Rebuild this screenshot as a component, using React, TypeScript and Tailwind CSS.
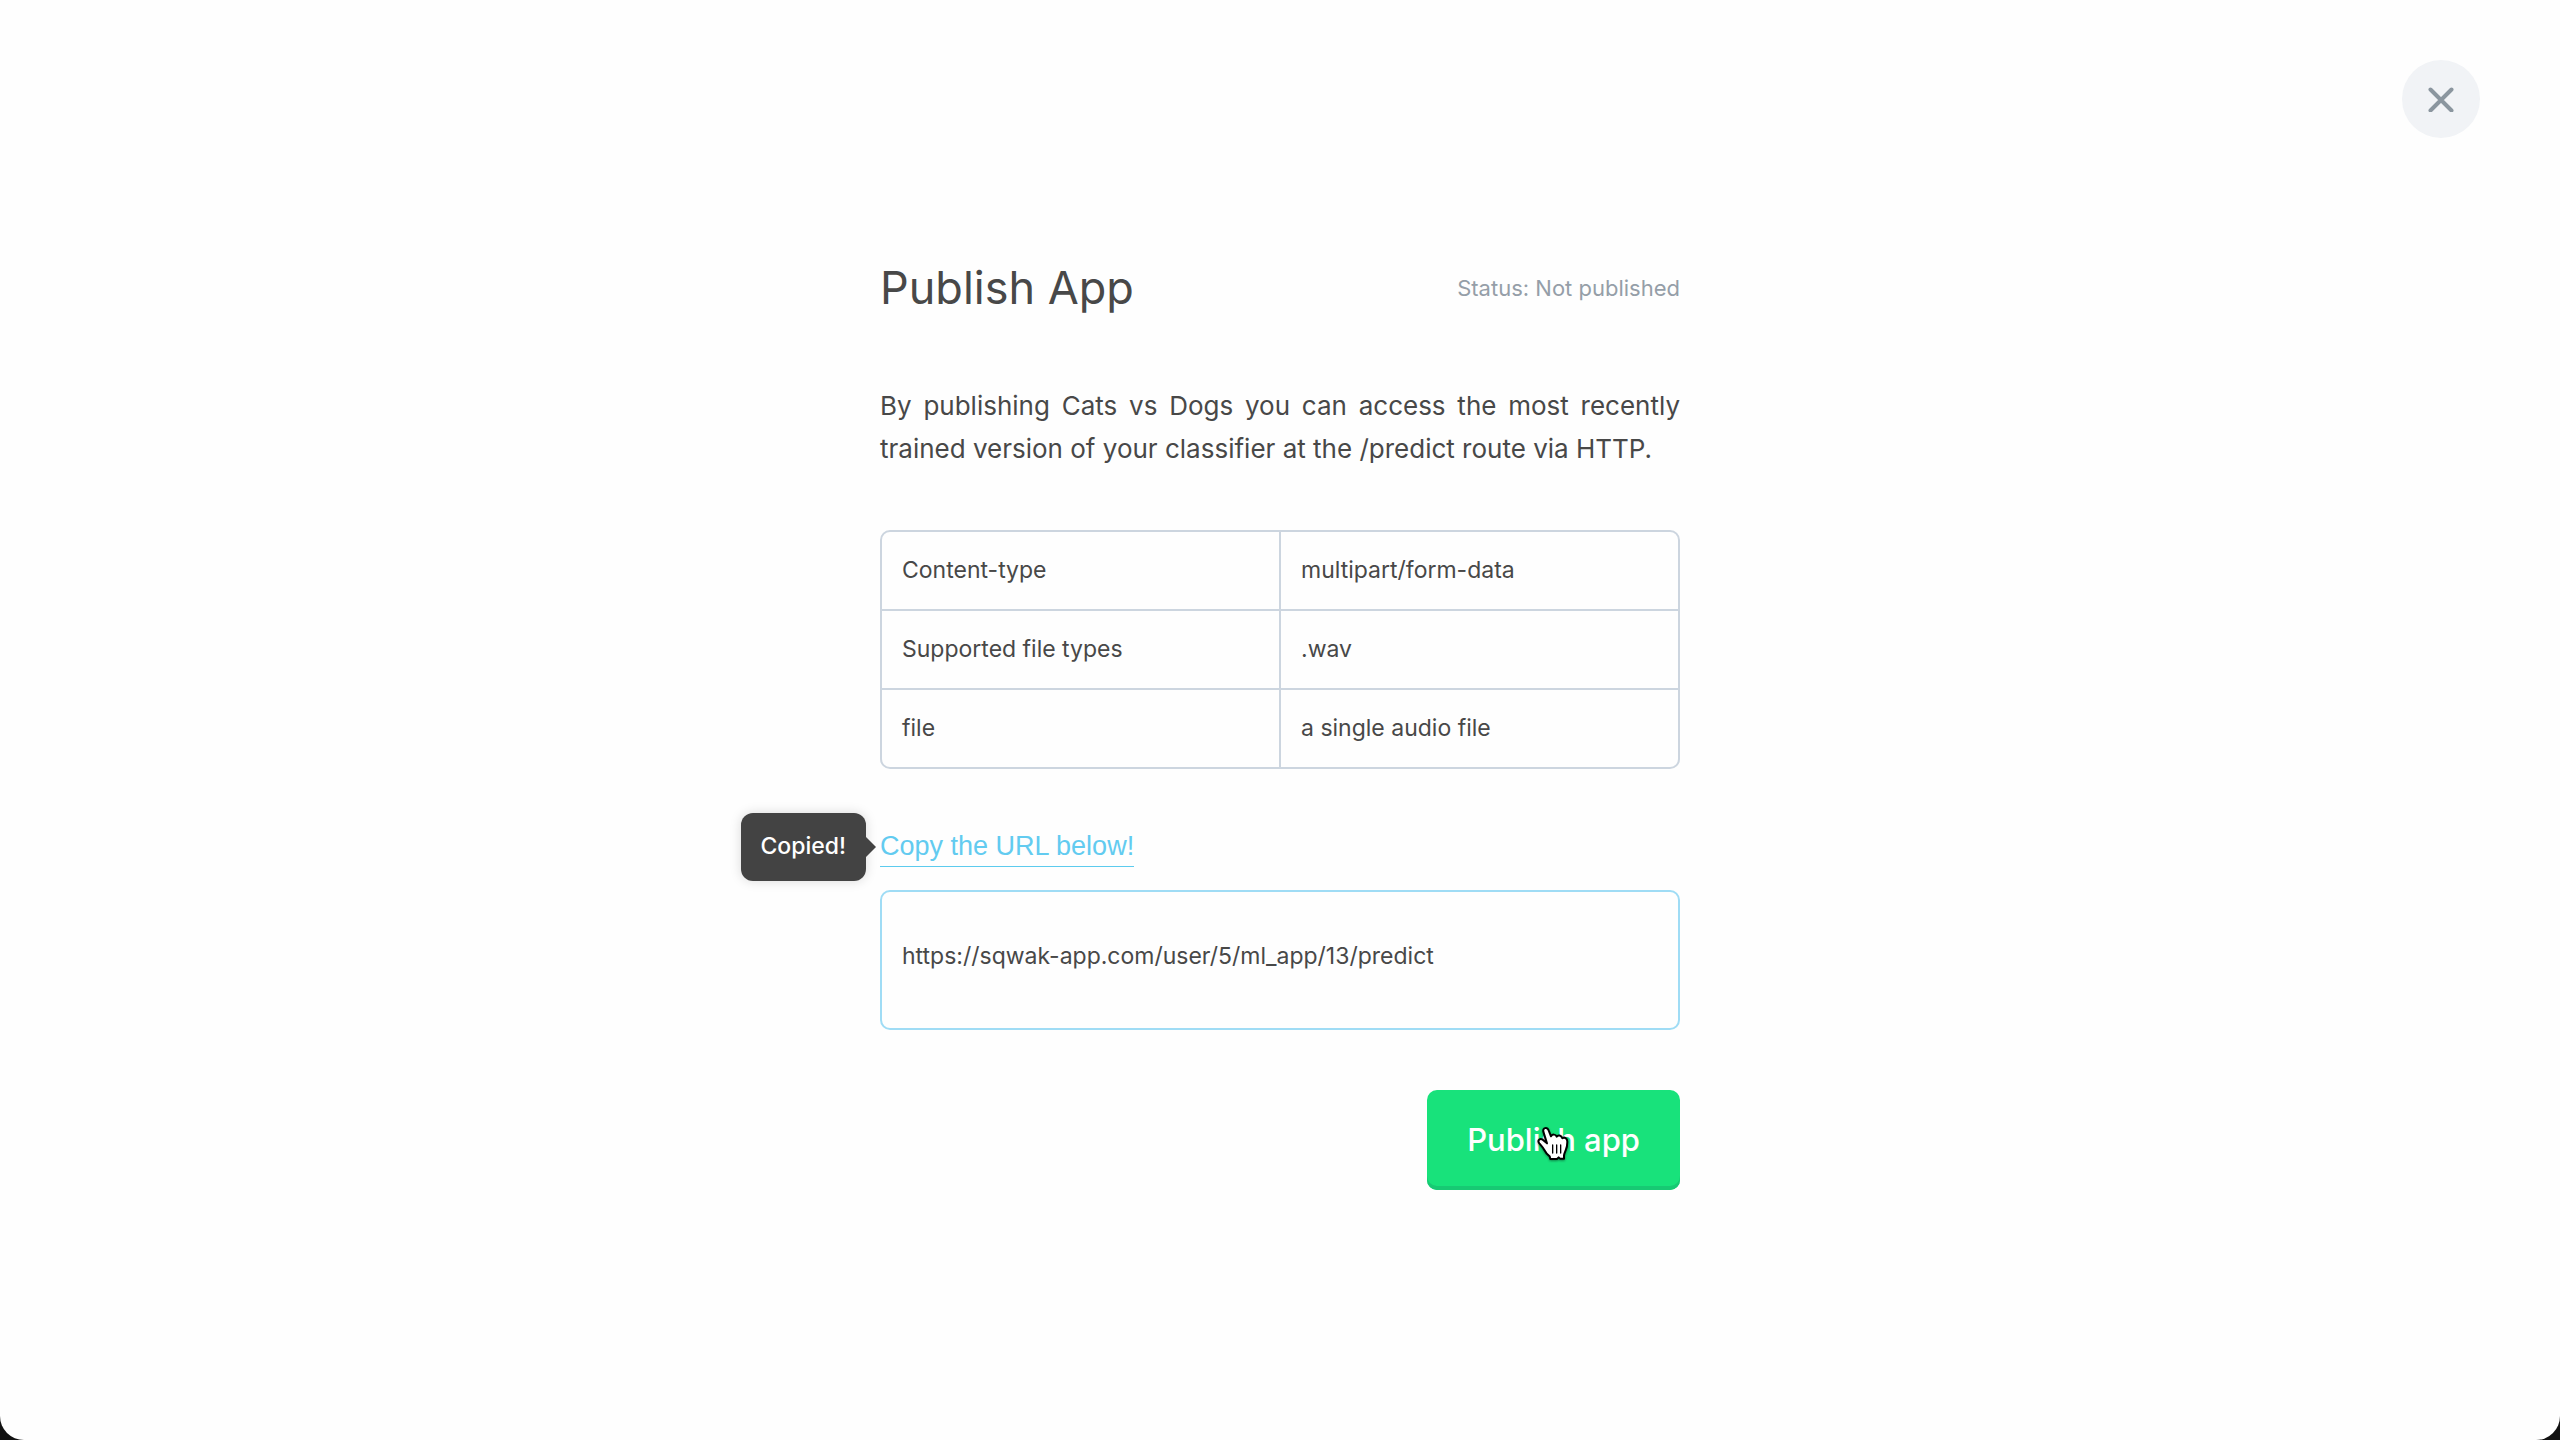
const params = [
  { name: "Content-type", value: "multipart/form-data" },
  { name: "Supported file types", value: ".wav" },
  { name: "file", value: "a single audio file" },
];

function CloseButton() {
  return (
    <button
      type="button"
      aria-label="Close"
      className="flex size-[78px] items-center justify-center rounded-full bg-[#f1f3f6]"
    >
      <svg viewBox="0 0 26 26" className="size-[26px]" fill="none" stroke="#8b969f" strokeWidth="4" strokeLinecap="round">
        <path d="M2.5 3.5 23.5 24.5M23.5 3.5 2.5 24.5" />
      </svg>
    </button>
  );
}

function HandCursor() {
  return (
    <svg
      viewBox="0 0 102 108"
      className="pointer-events-none absolute top-[36px] left-[109px] h-[36px] w-[34px] drop-shadow-[0_1px_1px_rgba(0,0,0,0.4)]"
      aria-hidden="true"
    >
      <path
        d="M22 17C19 5 34 2 38 13L45 31C49 24 59 24 62 32C66 26 76 27 79 37C85 32 94 37 94 47C94 58 92 66 89 73C86 80 84 84 84 89L84 98L72 98L68 94L63 99L43 99L41 91C34 86 29 80 25 72C21 64 15 58 10 52C3 43 12 36 20 41L33 52Z"
        fill="#fff"
        stroke="#000"
        strokeWidth="6"
        strokeLinejoin="round"
      />
      <path d="M50 57V81M62 57V81M74 57V81" stroke="#000" strokeWidth="4" strokeLinecap="round" fill="none" />
    </svg>
  );
}

export default function App() {
  return (
    <div className="bg-[#111111]">
      <div className="min-h-screen rounded-b-[24px] bg-[#fefefe] font-['Inter','Liberation_Sans',sans-serif] text-[#484848]">
        <header className="flex justify-end px-20 pt-[60px]">
          <CloseButton />
        </header>

        <main className="mx-auto mt-[120px] w-full max-w-[800px]">
          <div className="flex items-center justify-between">
            <h1 className="text-[45px] leading-[60px]">Publish App</h1>
            <p className="text-[22px] text-[#959ea8]">Status: Not published</p>
          </div>

          <p className="mt-[66px] text-justify text-[26px] leading-[43px]">
            By publishing Cats vs Dogs you can access the most recently trained version of your
            classifier at the /predict route via HTTP.
          </p>

          <div className="mt-[60px] overflow-hidden rounded-[10px] border-2 border-[#ccd5df]">
            <table className="w-full table-fixed border-collapse text-left text-[23px]">
              <tbody className="divide-y-2 divide-[#ccd5df]">
                {params.map((p) => (
                  <tr key={p.name} className="h-[79px] first:h-[78px] last:h-[78px]">
                    <th scope="row" className="border-r-2 border-[#ccd5df] px-5 font-normal">
                      {p.name}
                    </th>
                    <td className="px-5">{p.value}</td>
                  </tr>
                ))}
              </tbody>
            </table>
          </div>

          <div className="relative mt-[57px] flex w-fit">
            <button
              type="button"
              className="border-b border-[#5ccbee] font-['Liberation_Sans',sans-serif] text-[27px] leading-[40px] text-[#62cbf0]"
            >
              Copy the URL below!
            </button>
            <div
              role="tooltip"
              className="absolute top-1/2 right-full mr-[14px] flex h-[68px] -translate-y-1/2 items-center rounded-[12px] bg-[#434343] px-5 text-[23px] font-medium text-white shadow-[0_0_12px_rgba(0,0,0,0.15)]"
            >
              Copied!
              <svg viewBox="0 0 10 20" className="absolute left-full h-5 w-[10px]" aria-hidden="true">
                <path d="M0 0 10 10 0 20Z" fill="#434343" />
              </svg>
            </div>
          </div>

          <input
            type="text"
            readOnly
            aria-label="Prediction URL"
            value="https://sqwak-app.com/user/5/ml_app/13/predict"
            className="mt-[23px] block h-[140px] w-full rounded-[10px] border-2 border-[#9fdcf5] bg-transparent px-5 pb-2 text-[23px]"
          />

          <div className="mt-[60px] flex justify-end">
            <button
              type="button"
              className="relative h-[100px] rounded-[10px] bg-[#18e27b] px-10 text-[31px] font-medium text-white shadow-[inset_0_-4px_0_#17c973]"
            >
              Publish app
              <HandCursor />
            </button>
          </div>
        </main>
      </div>
    </div>
  );
}
